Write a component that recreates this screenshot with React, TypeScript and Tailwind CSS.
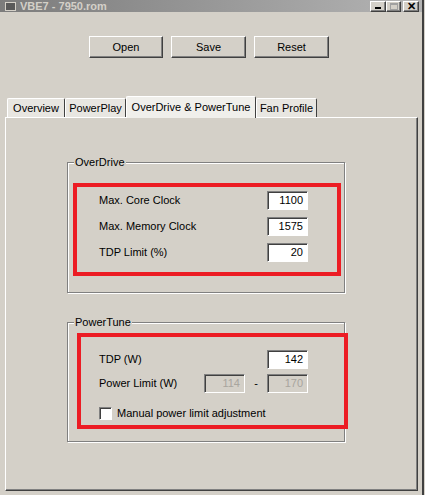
import React from 'react';

const font = { fontFamily: '"Liberation Sans", Arial, sans-serif' } as React.CSSProperties;

const raised =
  'border border-t-white border-l-white border-r-[#404040] border-b-[#404040] shadow-[inset_-1px_-1px_0_#808080]';
const sunken =
  'border border-t-[#808080] border-l-[#808080] border-r-white border-b-white shadow-[inset_1px_1px_0_#404040]';
const etched = 'border border-[#808080] shadow-[inset_1px_1px_0_#fff,1px_1px_0_#fff]';

function Field(props: { value: string; disabled?: boolean }) {
  return (
    <div
      className={`flex h-[19px] w-[41px] items-center justify-end pr-[4px] text-[11px] ${sunken} ${
        props.disabled ? 'bg-[#d4d0c8] text-[#a8a59e]' : 'bg-white text-black'
      }`}
    >
      {props.value}
    </div>
  );
}

function Group(props: { title: string; children: React.ReactNode; className?: string }) {
  return (
    <div className={`relative ml-[61px] w-[278px] ${etched} ${props.className ?? ''}`}>
      <span className="absolute -top-[8px] left-[6px] bg-[#d4d0c8] px-[1px] text-[11px] leading-[14px]">
        {props.title}
      </span>
      {props.children}
    </div>
  );
}

function Tab(props: { label: string; w: string; selected?: boolean }) {
  return (
    <div
      className={`flex items-center justify-center border-l border-t border-r border-l-white border-t-white border-r-[#404040] text-[11px] rounded-t-[2px] ${
        props.selected ? 'relative z-10 -mb-px h-[22px] bg-[#f0efeb]' : 'h-[19px] bg-[#e8e6e1]'
      } ${props.w}`}
    >
      {props.label}
    </div>
  );
}

export default function App() {
  return (
    <div className="h-[495px] w-[425px] overflow-hidden bg-[#d4d0c8] text-black" style={font}>
      <div className="h-[495px] w-[424px] border-r-2 border-[#404040]">
        {/* title bar, top of window is off-screen */}
        <div className="flex h-[12px] items-center overflow-hidden bg-gradient-to-r from-[#7c7c7c] to-[#b4b4b4]">
          <div className="ml-[5px] h-[9px] w-[11px] border border-[#d4d0c8] bg-[#5a5a5a]" />
          <span className="ml-[4px] text-[11px] font-bold leading-[12px] text-[#d4d0c8]">VBE7 - 7950.rom</span>
          <div className="ml-auto mr-[3px] flex h-[11px] items-end">
            <div className={`flex h-[11px] w-[16px] items-end justify-center bg-[#d4d0c8] pb-[2px] ${raised}`}>
              <div className="h-[2px] w-[6px] bg-black" />
            </div>
            <div className={`flex h-[11px] w-[15px] items-center justify-center bg-[#d4d0c8] ${raised}`}>
              <div className="h-[7px] w-[8px] border border-t-2 border-[#a0a0a0]" />
            </div>
            <div
              className={`ml-[2px] flex h-[11px] w-[16px] items-center justify-center bg-[#d4d0c8] text-[11px] font-bold leading-none ${raised}`}
            >
              ✕
            </div>
          </div>
        </div>

        {/* buttons */}
        <div className="mt-[24px] flex pl-[89px]">
          <button className={`h-[22px] w-[74px] bg-[#d4d0c8] text-[11px] ${raised}`}>Open</button>
          <button className={`ml-[8px] h-[22px] w-[75px] bg-[#d4d0c8] text-[11px] ${raised}`}>Save</button>
          <button className={`ml-[8px] h-[22px] w-[75px] bg-[#d4d0c8] text-[11px] ${raised}`}>Reset</button>
        </div>

        {/* tabs */}
        <div className="mt-[38px] flex items-end pl-[7px]">
          <Tab label="Overview" w="w-[58px]" />
          <Tab label="PowerPlay" w="w-[61px]" />
          <Tab label="OverDrive & PowerTune" w="w-[130px]" selected />
          <Tab label="Fan Profile" w="w-[61px]" />
        </div>

        {/* panel */}
        <div className="ml-[5px] h-[374px] w-[413px] border border-l-white border-t-white border-r-[#404040] border-b-[#404040] pt-[44px] shadow-[inset_-1px_-1px_0_#808080]">
          <Group title="OverDrive" className="h-[131px]">
            <div className="pointer-events-none absolute left-[5px] top-[20px] h-[93px] w-[268px] border-4 border-[#ec1c24]" />
            <div className="flex flex-col gap-[7px] pl-[31px] pr-[36px] pt-[28px] text-[11px]">
              <div className="flex items-center justify-between">
                <span>Max. Core Clock</span>
                <Field value="1100" />
              </div>
              <div className="flex items-center justify-between">
                <span>Max. Memory Clock</span>
                <Field value="1575" />
              </div>
              <div className="flex items-center justify-between">
                <span>TDP Limit (%)</span>
                <Field value="20" />
              </div>
            </div>
          </Group>

          <Group title="PowerTune" className="mt-[29px] h-[120px]">
            <div className="pointer-events-none absolute left-[9px] top-[10px] h-[96px] w-[271px] border-4 border-[#ec1c24]" />
            <div className="flex flex-col pl-[31px] pr-[36px] pt-[27px] text-[11px]">
              <div className="flex items-center justify-between">
                <span>TDP (W)</span>
                <Field value="142" />
              </div>
              <div className="mt-[5px] flex items-center">
                <span>Power Limit (W)</span>
                <div className="ml-auto flex items-center">
                  <Field value="114" disabled />
                  <span className="w-[22px] text-center">-</span>
                  <Field value="170" disabled />
                </div>
              </div>
              <div className="mt-[12px] flex items-center">
                <div className={`h-[13px] w-[13px] bg-white ${sunken}`} />
                <span className="ml-[5px]">Manual power limit adjustment</span>
              </div>
            </div>
          </Group>
        </div>
      </div>
    </div>
  );
}
